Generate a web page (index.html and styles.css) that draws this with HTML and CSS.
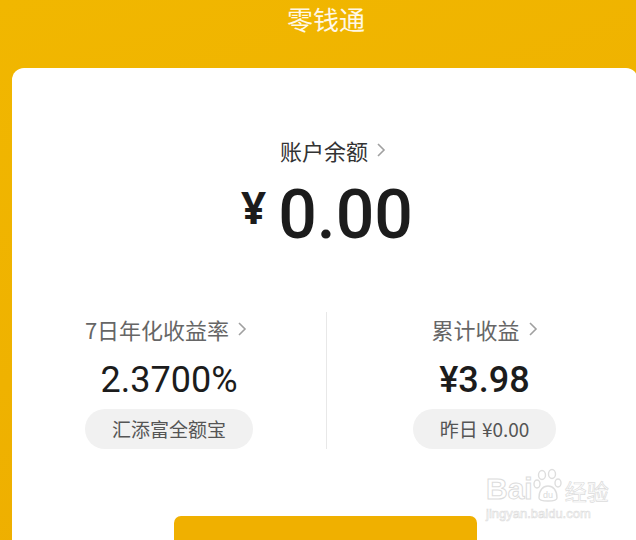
FILE: index.html
```html
<!DOCTYPE html>
<html lang="zh">
<head>
<meta charset="utf-8">
<title>零钱通</title>
<link rel="stylesheet" href="styles.css">
</head>
<body>
<div class="page">
  <header class="header">零钱通</header>
  <main class="card">
    <div class="balance-label">
      <span>账户余额</span>
      <svg class="chev" width="10" height="16" viewBox="0 0 10 16"><polyline points="2,2 8,8 2,14" fill="none" stroke="#a0a0a0" stroke-width="1.6"/></svg>
    </div>
    <div class="balance">
      <span class="yen">¥</span><span class="amount">0.00</span>
    </div>
    <div class="stats">
      <div class="stat">
        <div class="stat-title"><span>7日年化收益率</span>
          <svg class="chev" width="10" height="16" viewBox="0 0 10 16"><polyline points="2,2 8,8 2,14" fill="none" stroke="#a0a0a0" stroke-width="1.6"/></svg>
        </div>
        <div class="stat-value">2.3700%</div>
        <div class="pill">汇添富全额宝</div>
      </div>
      <div class="stat stat-right">
        <div class="stat-title"><span>累计收益</span>
          <svg class="chev" width="10" height="16" viewBox="0 0 10 16"><polyline points="2,2 8,8 2,14" fill="none" stroke="#a0a0a0" stroke-width="1.6"/></svg>
        </div>
        <div class="stat-value medium">¥3.98</div>
        <div class="pill">昨日 ¥0.00</div>
      </div>
    </div>
    <div class="actions">
      <button class="btn">转出</button>
    </div>
    <div class="watermark">
      <div class="wm-top">
        <span class="wm-bai">Bai</span>
        <svg class="wm-paw" width="30" height="36" viewBox="0 0 30 36">
          <g fill="none" stroke="#dedede" stroke-width="1.4">
            <ellipse cx="9" cy="7" rx="3.5" ry="4.5"/>
            <ellipse cx="19" cy="6" rx="3.5" ry="4.5"/>
            <ellipse cx="4" cy="16" rx="3" ry="4"/>
            <ellipse cx="25" cy="15" rx="3" ry="4"/>
            <path d="M6 30 C6 22 10 18 15 18 C20 18 24 22 24 30 C24 34 6 34 6 30 Z"/>
          </g>
          <text x="15" y="30" text-anchor="middle" font-size="9" fill="#dadada" font-family="Liberation Sans, sans-serif">du</text>
        </svg>
        <span class="wm-cn">经验</span>
      </div>
      <div class="wm-url">jingyan.baidu.com</div>
    </div>
  </main>
</div>
</body>
</html>
```

FILE: styles.css
```css
* { box-sizing: border-box; }
html, body {
  margin: 0;
  padding: 0;
  width: 636px;
  height: 540px;
  overflow: hidden;
}
body {
  background: linear-gradient(160deg, #f1b700 0%, #efb200 50%, #eeac00 100%);
  font-family: "Noto Sans CJK SC", "Noto Sans", sans-serif;
}
.page {
  display: flex;
  flex-direction: column;
}
.header {
  height: 68px;
  line-height: 38px;
  text-align: center;
  color: #fff8e6;
  font-size: 26px;
  padding-left: 16px;
}
.card {
  position: relative;
  margin-left: 12px;
  width: 626px;
  height: 520px;
  background: #fff;
  border-radius: 12px;
  padding-top: 67px;
  display: flex;
  flex-direction: column;
  align-items: stretch;
}
.balance-label {
  display: flex;
  justify-content: center;
  align-items: center;
  gap: 8px;
  font-size: 22px;
  line-height: 30px;
  color: #333;
  padding-left: 16px;
}
.chev { display: block; }
.balance {
  display: flex;
  justify-content: center;
  align-items: baseline;
  margin-top: 10px;
  color: #1c1c1c;
  padding-left: 4px;
}
.yen {
  font-family: "Noto Sans", sans-serif;
  font-size: 44px;
  font-weight: 700;
  margin-right: 12px;
  position: relative;
  top: -14px;
}
.amount {
  font-family: Roboto, "Noto Sans", sans-serif;
  font-size: 68px;
  font-weight: 500;
  line-height: 80px;
}
.stats {
  display: grid;
  grid-template-columns: 314px 1fr;
  margin-top: 57px;
}
.stat {
  display: flex;
  flex-direction: column;
  align-items: center;
  padding-top: 2px;
  height: 137px;
}
.stat-right {
  border-left: 1px solid #e8e8e8;
  padding-left: 4px;
}
.stat-title {
  display: flex;
  align-items: center;
  gap: 8px;
  font-size: 22px;
  line-height: 30px;
  color: #666;
}
.stat:first-child .stat-title { margin-left: -6px; }
.stat-value {
  margin-top: 14px;
  font-family: Roboto, "Noto Sans", sans-serif;
  font-size: 36px;
  line-height: 44px;
  color: #1c1c1c;
}
.stat-value.medium { font-weight: 500; }
.pill {
  margin-top: 7px;
  height: 40px;
  line-height: 40px;
  padding: 0 27px;
  border-radius: 20px;
  background: #f1f1f1;
  color: #555;
  font-size: 19px;
}
.actions {
  display: flex;
  padding-left: 162px;
  margin-top: 67px;
}
.btn {
  width: 303px;
  height: 88px;
  border: none;
  border-radius: 7px;
  background: #f0b000;
  color: #fff;
  font-family: "Noto Sans CJK SC", sans-serif;
  font-size: 24px;
  padding: 0;
}
.watermark {
  position: absolute;
  left: 474px;
  top: 400px;
  color: transparent;
  -webkit-text-stroke: 1px #dcdcdc;
}
.wm-top {
  display: flex;
  align-items: flex-end;
}
.wm-bai {
  font-family: "Liberation Sans", sans-serif;
  font-size: 30px;
  line-height: 30px;
  font-weight: 700;
}
.wm-paw { margin: 0 2px 0 0; }
.wm-cn {
  font-size: 22px;
  line-height: 28px;
  -webkit-text-stroke: 0.7px #dcdcdc;
}
.wm-url {
  font-family: "Liberation Sans", sans-serif;
  font-size: 13px;
  -webkit-text-stroke: 0.6px #dcdcdc;
  margin-top: 2px;
}
```
